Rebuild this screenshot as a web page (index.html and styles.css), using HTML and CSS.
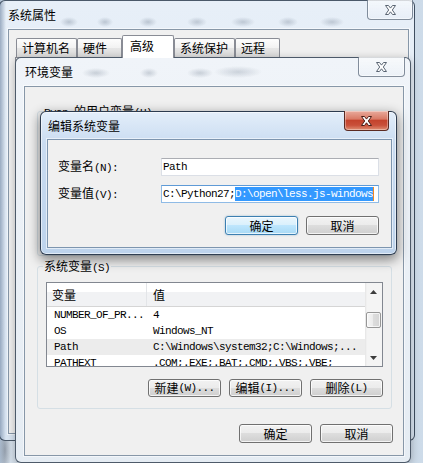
FILE: index.html
```html
<!DOCTYPE html>
<html lang="zh-CN">
<head>
<meta charset="utf-8">
<title>编辑系统变量</title>
<link rel="stylesheet" href="styles.css">
</head>
<body>
<div class="desktop">

  <section class="win win-sys">
    <header class="titlebar"><span class="title">系统属性</span></header>
    <button class="close inactive" aria-label="关闭"><svg width="13" height="10" viewBox="0 0 13 10"><path d="M1.5 .5h3l2 2.6 2-2.6h3L8.3 5l3.2 4.5h-3l-2-2.7-2 2.7h-3L4.7 5z" fill="#fff" stroke="#5a6573" stroke-width="1"/></svg></button>
    <div class="client sys-client">
      <div class="tabs">
        <div class="tab">计算机名</div>
        <div class="tab">硬件</div>
        <div class="tab sel">高级</div>
        <div class="tab">系统保护</div>
        <div class="tab">远程</div>
      </div>
      <div class="tabpanel"></div>
    </div>
  </section>

  <section class="win win-env">
    <header class="titlebar"><span class="title">环境变量</span></header>
    <button class="close inactive" aria-label="关闭"><svg width="13" height="10" viewBox="0 0 13 10"><path d="M1.5 .5h3l2 2.6 2-2.6h3L8.3 5l3.2 4.5h-3l-2-2.7-2 2.7h-3L4.7 5z" fill="#fff" stroke="#5a6573" stroke-width="1"/></svg></button>
    <div class="client env-client">
      <div class="group user-group">
        <div class="group-label"><span class="a">Ryan </span>的用户变量<span class="a">(U)</span></div>
      </div>
      <div class="group sys-group">
        <div class="group-label">系统变量<span class="a">(S)</span></div>
        <div class="listview">
          <div class="lv-main">
            <div class="lv-header">
              <div class="lv-h c1">变量</div>
              <div class="lv-h c2">值</div>
            </div>
            <div class="lv-row mono"><div class="c1">NUMBER_OF_PR...</div><div class="c2">4</div></div>
            <div class="lv-row mono"><div class="c1">OS</div><div class="c2">Windows_NT</div></div>
            <div class="lv-row mono hl"><div class="c1">Path</div><div class="c2">C:\Windows\system32;C:\Windows;...</div></div>
            <div class="lv-row mono"><div class="c1">PATHEXT</div><div class="c2">.COM;.EXE;.BAT;.CMD;.VBS;.VBE;</div></div>
          </div>
          <div class="vscroll">
            <div class="sb-btn"><svg width="7" height="4" viewBox="0 0 7 4"><path d="M3.5 0L7 4H0z" fill="#3c3c3c"/></svg></div>
            <div class="sb-track"><div class="sb-thumb"></div></div>
            <div class="sb-btn"><svg width="7" height="4" viewBox="0 0 7 4"><path d="M0 0h7L3.5 4z" fill="#3c3c3c"/></svg></div>
          </div>
        </div>
        <div class="btnrow group-btns">
          <button class="btn">新建<span class="a">(W)...</span></button>
          <button class="btn">编辑<span class="a">(I)...</span></button>
          <button class="btn">删除<span class="a">(L)</span></button>
        </div>
      </div>
      <div class="btnrow env-bottom">
        <button class="btn">确定</button>
        <button class="btn">取消</button>
      </div>
    </div>
  </section>

  <section class="win win-edit">
    <header class="titlebar"><span class="title">编辑系统变量</span></header>
    <button class="close active" aria-label="关闭"><svg width="13" height="10" viewBox="0 0 13 10"><path d="M1.5 .5h3l2 2.6 2-2.6h3L8.3 5l3.2 4.5h-3l-2-2.7-2 2.7h-3L4.7 5z" fill="#fff" stroke="#4a1d16" stroke-width="1"/></svg></button>
    <div class="client edit-client">
      <div class="field">
        <label>变量名<span class="a">(N):</span></label>
        <div class="input mono">Path</div>
      </div>
      <div class="field">
        <label>变量值<span class="a">(V):</span></label>
        <div class="input focus mono">C:\Python27;<span class="seltext">D:\open\less.js-windows</span><span class="caret"></span></div>
      </div>
      <div class="btnrow edit-btns">
        <button class="btn default">确定</button>
        <button class="btn">取消</button>
      </div>
    </div>
  </section>

</div>
</body>
</html>
```

FILE: styles.css
```css
* { box-sizing: border-box; }
html, body { margin: 0; padding: 0; }
body {
  font-family: "Noto Sans CJK SC", "Liberation Sans", sans-serif;
  font-size: 12px;
  line-height: 1;
  color: #000;
  background: #d4dfeb;
}

.desktop {
  position: relative;
  width: 423px;
  height: 463px;
  overflow: hidden;
  background:
    radial-gradient(6px 30px at 5px 450px, rgba(70,80,95,.45), rgba(70,80,95,0)),
    linear-gradient(90deg, #aebfd2 0, #d6e1ec 6px, #e4ecf4 50%, #cddbe9 100%);
}

.a, .mono {
  font-family: "Liberation Mono", "DejaVu Sans Mono", monospace;
  font-size: 11px;
  letter-spacing: -0.6px;
}

/* ---------- windows ---------- */
.win {
  position: absolute;
  display: flex;
  flex-direction: column;
  border: 1px solid rgba(38, 52, 70, .8);
  border-radius: 6px;
}
.titlebar {
  flex: none;
  display: flex;
  align-items: center;
  white-space: nowrap;
}
.title { font-size: 12px; line-height: 12px; }
.client {
  flex: 1;
  min-height: 0;
  display: flex;
  flex-direction: column;
  background: #f0f0f0;
  border: 1px solid #8797a8;
  box-shadow: 0 0 0 1px rgba(255,255,255,.55);
}

.win-sys {
  left: -1px;
  top: 0;
  width: 416px;
  height: 441px;
  background:
    radial-gradient(9px 5px at 69px 21px, rgba(95,110,130,.32), rgba(95,110,130,0)),
    radial-gradient(8px 5px at 105px 21px, rgba(95,110,130,.32), rgba(95,110,130,0)),
    radial-gradient(9px 5px at 148px 21px, rgba(95,110,130,.32), rgba(95,110,130,0)),
    radial-gradient(10px 5px at 197px 21px, rgba(95,110,130,.3), rgba(95,110,130,0)),
    radial-gradient(12px 5px at 243px 21px, rgba(95,110,130,.3), rgba(95,110,130,0)),
    radial-gradient(10px 5px at 288px 21px, rgba(95,110,130,.3), rgba(95,110,130,0)),
    radial-gradient(12px 5px at 332px 21px, rgba(95,110,130,.3), rgba(95,110,130,0)),
    linear-gradient(90deg, rgba(105,128,158,.6) 0, rgba(105,128,158,0) 6px),
    linear-gradient(#e7eff8, #d9e5f2);
}
.win-sys .titlebar { height: 28px; padding-left: 8px; }
.win-sys .client { margin: 0 5px 6px 8px; }

.win-env {
  left: 15px;
  top: 57px;
  width: 396px;
  height: 406px;
  box-shadow: 0 2px 8px rgba(0,0,0,.28);
  background:
    radial-gradient(14px 5px at 80px 15px, rgba(95,110,130,.28), rgba(95,110,130,0)),
    radial-gradient(9px 5px at 133px 15px, rgba(95,110,130,.28), rgba(95,110,130,0)),
    radial-gradient(13px 5px at 184px 15px, rgba(95,110,130,.28), rgba(95,110,130,0)),
    radial-gradient(24px 6px at 222px 14px, rgba(95,110,130,.25), rgba(95,110,130,0)),
    linear-gradient(#f0f4f9, #e5ecf3);
}
.win-env .titlebar { height: 28px; padding-left: 9px; }
.win-env .client { margin: 0 6px 6px 8px; }

.win-edit {
  left: 40px;
  top: 111px;
  width: 357px;
  height: 144px;
  border-color: rgba(28, 42, 62, .9);
  box-shadow: 0 4px 12px 1px rgba(0,0,0,.45), inset 0 0 0 1px rgba(255,255,255,.55);
  background: linear-gradient(#e3eefa 0, #cadcf1 22%, #bdd3ec 100%);
}
.win-edit .titlebar { height: 27px; padding-left: 7px; }
.win-edit .client { margin: 0 4px 6px 6px; border-color: #7d95af; }

/* ---------- caption buttons ---------- */
.close {
  position: absolute;
  top: -1px;
  height: 20px;
  padding: 0;
  display: flex;
  align-items: center;
  justify-content: center;
  border: 1px solid rgba(70, 85, 105, .65);
  border-top: 0;
  border-radius: 0 0 4px 4px;
}
.close.inactive {
  background: linear-gradient(rgba(255,255,255,.55), rgba(232,238,246,.5));
  box-shadow: inset 0 0 0 1px rgba(255,255,255,.5);
}
.win-sys .close { right: 1px; width: 46px; }
.win-env .close { right: 5px; width: 47px; }
.close.active {
  right: 7px;
  width: 45px;
  border-color: #5b2a22;
  background: linear-gradient(#e9ab9d 0, #d97a66 42%, #c4432d 50%, #c9503a 75%, #e08f74 100%);
  box-shadow: inset 0 0 0 1px rgba(255,255,255,.35);
}

/* ---------- tabs ---------- */
.tabs {
  flex: none;
  display: flex;
  align-items: flex-end;
  padding: 5px 0 0 7px;
}
.tab {
  height: 19px;
  min-width: 45px;
  padding: 0 6px 0 5px;
  display: flex;
  align-items: center;
  line-height: 12px;
  white-space: nowrap;
  border: 1px solid #898c95;
  border-bottom: 0;
  border-radius: 2px 2px 0 0;
  background: linear-gradient(#fdfdfd, #f2f2f2 50%, #e6e6e6 50%, #dcdcdc);
}
.tab.sel {
  position: relative;
  z-index: 1;
  height: 23px;
  min-width: 52px;
  margin-bottom: -1px;
  padding: 0 6px 2px 7px;
  background: #fff;
}
.tabpanel {
  flex: 1;
  margin: 0 5px 5px 6px;
  border: 1px solid #898c95;
  background: #fcfcfc;
}

/* ---------- group boxes ---------- */
.group {
  flex: none;
  display: flex;
  flex-direction: column;
  border: 1px solid #d5dfe5;
  border-radius: 3px;
}
.group-label {
  align-self: flex-start;
  height: 12px;
  line-height: 12px;
  margin: -7px 0 0 5px;
  padding: 0 1px;
  white-space: nowrap;
  background: #f0f0f0;
}
.user-group { margin: 24px 11px 0 12px; height: 145px; }
.sys-group { margin: 10px 11px 0 12px; padding: 0 8px 11px; }
.sys-group .group-label { margin-left: -3px; }

/* ---------- list view ---------- */
.listview {
  margin-top: 10px;
  height: 85px;
  display: flex;
  border: 1px solid #828790;
  background: #fff;
}
.lv-main { flex: 1; min-width: 0; overflow: hidden; }
.lv-header {
  display: flex;
  height: 24px;
  border-bottom: 1px solid #d5d5d5;
  background: linear-gradient(#fff 0, #fff 40%, #f1f2f4 40%, #f1f2f4 100%);
}
.lv-h { display: flex; align-items: center; line-height: 12px; }
.lv-h.c1 { width: 100px; flex: none; padding-left: 5px; border-right: 1px solid #e3e5e8; }
.lv-h.c2 { padding-left: 6px; }
.lv-row {
  display: flex;
  align-items: center;
  height: 16px;
  white-space: nowrap;
}
.lv-row .c1 { width: 100px; flex: none; padding-left: 7px; }
.lv-row .c2 { padding-left: 6px; }
.lv-row.hl { background: #ececec; }

.vscroll {
  width: 17px;
  flex: none;
  display: flex;
  flex-direction: column;
  background: linear-gradient(90deg, #e4e4e4, #f4f4f4 2px, #f4f4f4);
}
.sb-btn {
  height: 17px;
  flex: none;
  display: flex;
  align-items: center;
  justify-content: center;
}
.sb-track { flex: 1; }
.sb-thumb {
  margin: 12px 0 0 1px;
  width: 15px;
  height: 16px;
  border: 1px solid #979797;
  border-radius: 2px;
  background: linear-gradient(90deg, #f6f6f6, #eaeaea 50%, #dcdcdc 50%, #d5d5d5);
  box-shadow: inset 0 0 0 1px rgba(255,255,255,.7);
}

/* ---------- buttons ---------- */
.btnrow { display: flex; justify-content: flex-end; gap: 8px; flex: none; }
.btn {
  font: inherit;
  color: #000;
  width: 73px;
  height: 19px;
  padding: 0;
  display: flex;
  align-items: center;
  justify-content: center;
  line-height: 12px;
  white-space: nowrap;
  border: 1px solid #707070;
  border-radius: 3px;
  background: linear-gradient(#f2f2f2, #ebebeb 50%, #dddddd 50%, #cfcfcf);
  box-shadow: inset 0 0 0 1px rgba(255,255,255,.75);
}
.group-btns { margin-top: 12px; }
.group-btns .btn { height: 18px; }
.env-bottom { margin: 15px 10px 0 0; }

.btn.default {
  border-color: #3c7fb1;
  background: linear-gradient(#eaf6fd, #d9f0fc 50%, #bee6fd 50%, #a7d9f5);
  box-shadow: inset 0 0 0 1px rgba(255,255,255,.7), 0 0 2px rgba(60,127,177,.5);
}

/* ---------- edit dialog ---------- */
.edit-client { padding: 18px 12px 0 10px; }
.field { display: flex; align-items: center; height: 18px; }
.field + .field { margin-top: 9px; }
.field label { width: 103px; flex: none; line-height: 12px; white-space: nowrap; }
.input {
  width: 218px;
  height: 18px;
  padding-left: 1px;
  display: flex;
  align-items: center;
  white-space: nowrap;
  overflow: hidden;
  background: #fff;
  border: 1px solid #dbdfe6;
  border-top-color: #abadb3;
}
.input.focus { border-color: #8fbbe6; border-top-color: #5e9ad6; }
.seltext { background: #3399ff; color: #fff; line-height: 14px; }
.caret { width: 1px; height: 14px; background: #f08a24; flex: none; }
.edit-btns { margin-top: 13px; }
```
